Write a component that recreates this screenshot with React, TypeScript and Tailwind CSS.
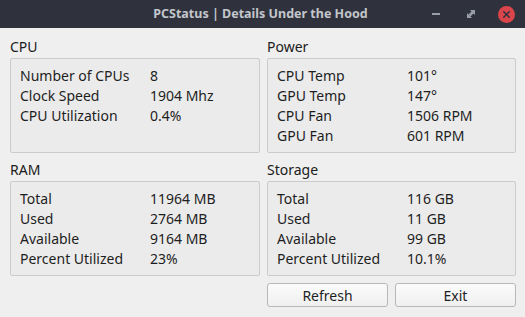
import { X } from "lucide-react";

type Row = [string, string];

const sections: { title: string; rows: Row[] }[] = [
  {
    title: "CPU",
    rows: [
      ["Number of CPUs", "8"],
      ["Clock Speed", "1904 Mhz"],
      ["CPU Utilization", "0.4%"],
    ],
  },
  {
    title: "Power",
    rows: [
      ["CPU Temp", "101°"],
      ["GPU Temp", "147°"],
      ["CPU Fan", "1506 RPM"],
      ["GPU Fan", "601 RPM"],
    ],
  },
  {
    title: "RAM",
    rows: [
      ["Total", "11964 MB"],
      ["Used", "2764 MB"],
      ["Available", "9164 MB"],
      ["Percent Utilized", "23%"],
    ],
  },
  {
    title: "Storage",
    rows: [
      ["Total", "116 GB"],
      ["Used", "11 GB"],
      ["Available", "99 GB"],
      ["Percent Utilized", "10.1%"],
    ],
  },
];

function Group({ title, rows }: { title: string; rows: Row[] }) {
  return (
    <div className="flex flex-col">
      <div className="leading-4 text-[14px] text-[#202020] mb-[3px]">{title}</div>
      <div className="h-[95px] rounded-[2px] border border-[#cbcbcb] bg-[#ebebeb] pl-[9px] pt-[7px]">
        {rows.map(([label, value]) => (
          <div key={label} className="flex leading-5 text-[14px] text-[#1e1e1e]">
            <span className="w-[130px]">{label}</span>
            <span>{value}</span>
          </div>
        ))}
      </div>
    </div>
  );
}

function TitleBar() {
  return (
    <div className="relative h-7 bg-[#2f323c] flex items-center justify-center">
      <span className="text-[12.5px] font-bold text-[#c3c6cc] mr-[4px]">
        PCStatus | Details Under the Hood
      </span>
      <div className="absolute right-[10px] top-0 h-7 flex items-center">
        <span className="w-[8px] h-[2px] bg-[#9a9ea6] mr-[27px]" />
        <svg width="8" height="8" viewBox="0 0 8 8" className="mr-[23px]">
          <path d="M3 0H8V5L6.5 3.5L3.5 6.5L1.5 4.5L4.5 1.5Z" fill="#9a9ea6" />
          <path d="M0 3V8H5Z" fill="#9a9ea6" />
        </svg>
        <span className="w-[17px] h-[17px] rounded-full bg-[#d9454b] flex items-center justify-center">
          <X className="w-[11px] h-[11px] text-[#2f323c]" strokeWidth={3.2} />
        </span>
      </div>
    </div>
  );
}

export default function App() {
  return (
    <div
      className="w-[525px] h-[317px] bg-[#efefef] overflow-hidden"
      style={{ fontFamily: '"Noto Sans", "Open Sans", sans-serif' }}
    >
      <TitleBar />
      <div className="pl-[10px] pr-[9px] pt-[11px]">
        <div className="grid grid-cols-[250px_249px] gap-x-[7px] gap-y-[9px]">
          {sections.map((s) => (
            <Group key={s.title} title={s.title} rows={s.rows} />
          ))}
        </div>
        <div className="flex gap-[7px] mt-[7px] ml-[257px]">
          <button className="w-[121px] h-[24px] rounded-[3px] border border-[#b8b8b8] bg-gradient-to-b from-[#fbfbfb] to-[#f0f0f0] text-[14px] text-[#1e1e1e]">
            Refresh
          </button>
          <button className="w-[121px] h-[24px] rounded-[3px] border border-[#b8b8b8] bg-gradient-to-b from-[#fbfbfb] to-[#f0f0f0] text-[14px] text-[#1e1e1e]">
            Exit
          </button>
        </div>
      </div>
    </div>
  );
}
